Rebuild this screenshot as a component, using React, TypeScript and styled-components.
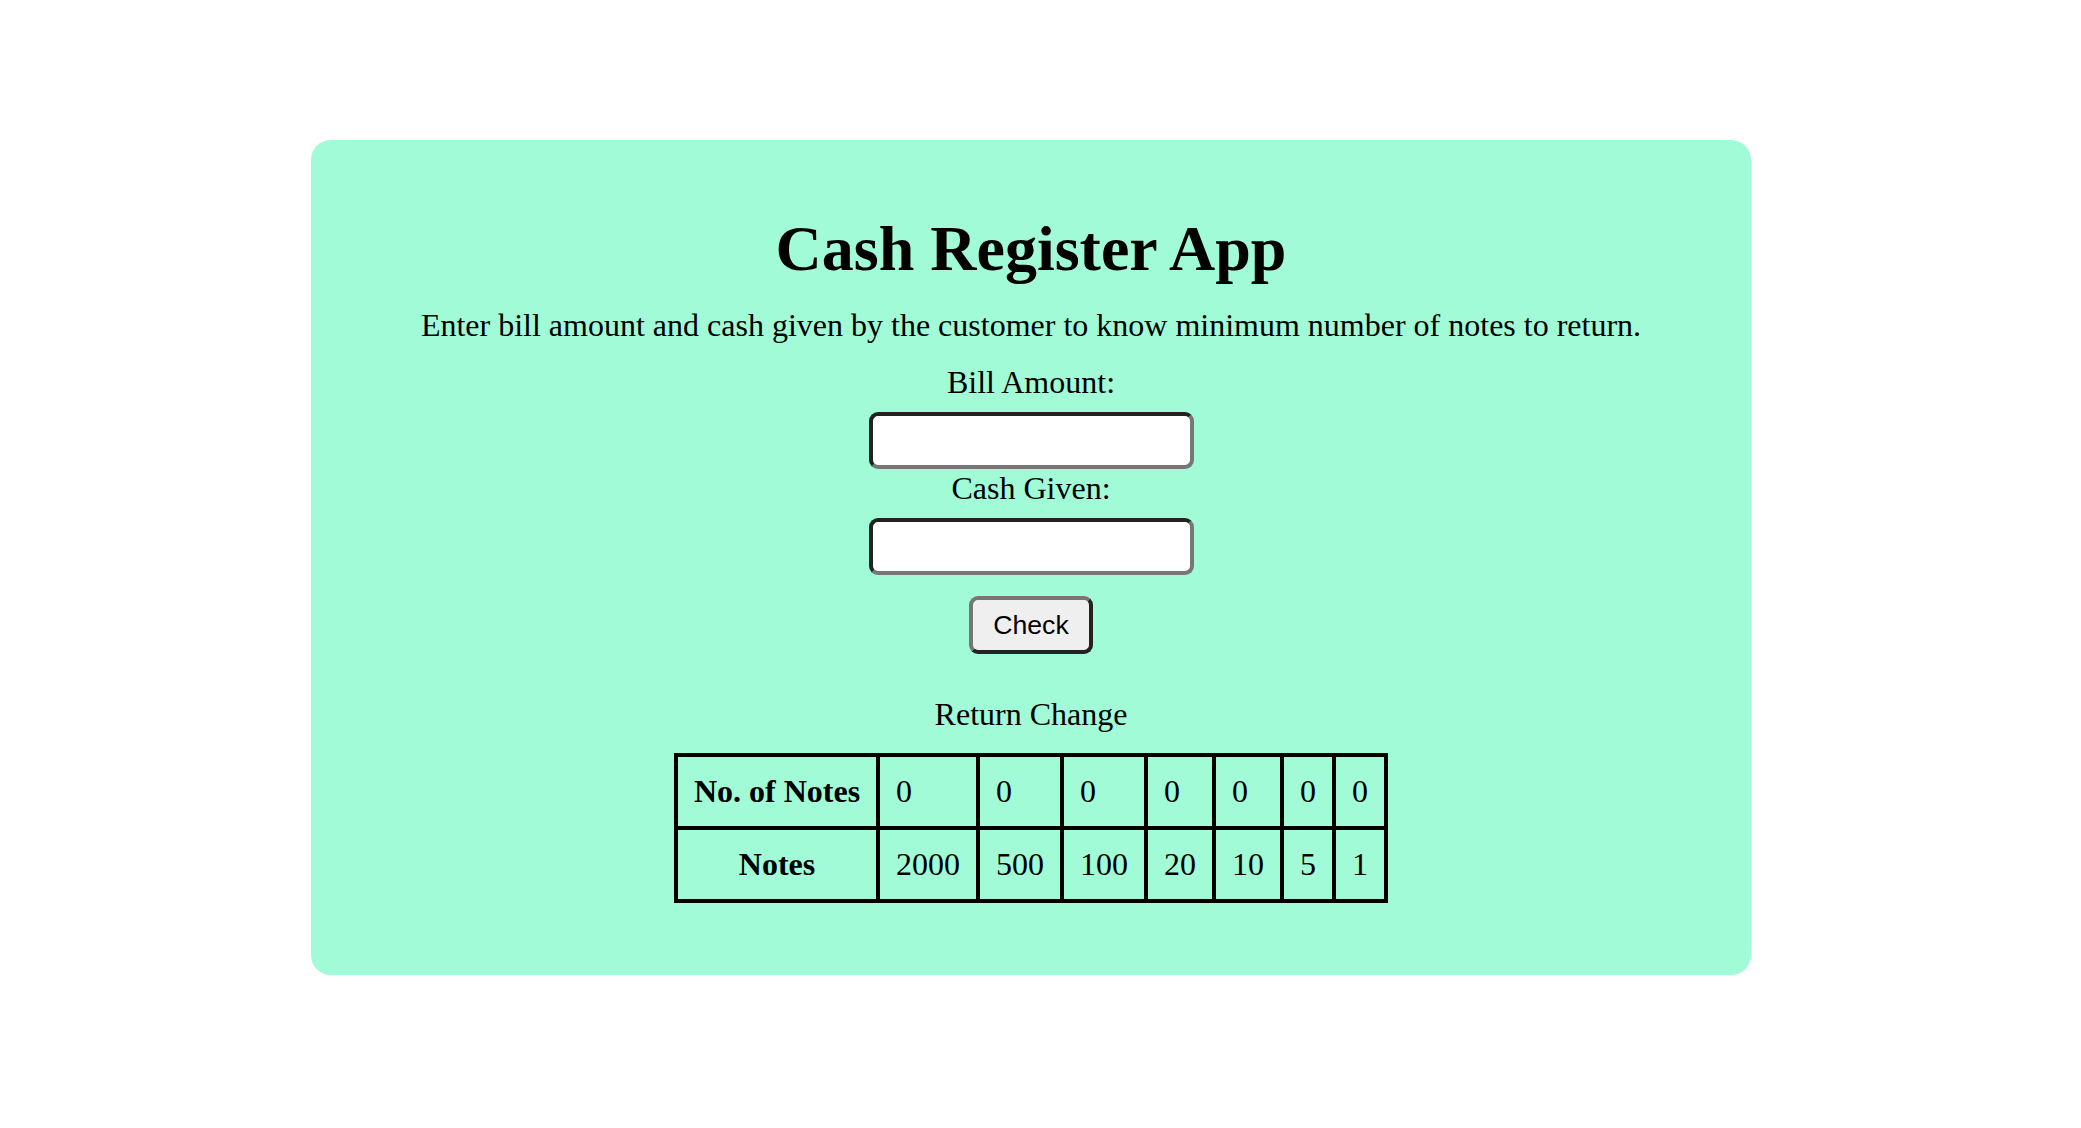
import React from "react";
import styled, { createGlobalStyle } from "styled-components";

const GlobalStyle = createGlobalStyle`
  html, body {
    margin: 0;
    padding: 0;
    background: #ffffff;
  }
  body {
    font-family: "Liberation Serif", "Times New Roman", serif;
    color: #000000;
  }
`;

const Page = styled.main`
  display: flex;
  justify-content: flex-start;
  padding: 140px 0 153px 311px;
`;

const Card = styled.section`
  box-sizing: border-box;
  width: 1440px;
  padding: 73px 0 72px;
  background: #a1fbd7;
  border-radius: 20px;
  display: flex;
  flex-direction: column;
  align-items: center;
`;

const Title = styled.h1`
  margin: 0;
  font-size: 64px;
  line-height: 71px;
  font-weight: 700;
`;

const Intro = styled.p`
  margin: 23px 0 0;
  font-size: 32px;
  line-height: 36px;
`;

const FieldLabel = styled.label<{ $gap: number }>`
  display: block;
  margin-top: ${(p) => p.$gap}px;
  font-size: 32px;
  line-height: 36px;
`;

const AmountInput = styled.input<{ $gap: number }>`
  box-sizing: border-box;
  width: 325px;
  height: 57px;
  margin: ${(p) => p.$gap}px 0 0;
  padding: 2px 6px;
  background: #ffffff;
  border-style: solid;
  border-width: 4px;
  border-color: #222222 #767676 #767676 #222222;
  border-radius: 9px;
  font-size: 27px;
  font-family: "Liberation Sans", Arial, sans-serif;
  outline: none;
`;

const CheckButton = styled.button`
  box-sizing: border-box;
  width: 124px;
  height: 58px;
  margin-top: 21px;
  padding: 0;
  background: #efefef;
  border-style: solid;
  border-width: 4px;
  border-color: #767676 #222222 #222222 #767676;
  border-radius: 9px;
  color: #000000;
  font-family: "Liberation Sans", Arial, Helvetica, sans-serif;
  font-size: 26.67px;
  line-height: 30px;
  cursor: pointer;
`;

const SectionLabel = styled.div`
  margin-top: 42px;
  font-size: 32px;
  line-height: 36px;
`;

const ChangeTable = styled.table`
  margin-top: 21px;
  border-collapse: collapse;
  border: 4px solid #000000;
  font-size: 32px;
  line-height: 37px;
`;

const HeadCell = styled.th`
  border: 4px solid #000000;
  padding: 16px;
  font-weight: 700;
  text-align: center;
  white-space: nowrap;
`;

const Cell = styled.td`
  border: 4px solid #000000;
  padding: 16px;
  text-align: left;
  white-space: nowrap;
`;

const notes = [2000, 500, 100, 20, 10, 5, 1];

export default function App() {
  return (
    <>
      <GlobalStyle />
      <Page>
        <Card>
          <Title>Cash Register App</Title>
          <Intro>
            Enter bill amount and cash given by the customer to know minimum
            number of notes to return.
          </Intro>
          <FieldLabel $gap={21} htmlFor="bill">
            Bill Amount:
          </FieldLabel>
          <AmountInput $gap={12} id="bill" type="number" />
          <FieldLabel $gap={1} htmlFor="cash">
            Cash Given:
          </FieldLabel>
          <AmountInput $gap={12} id="cash" type="number" />
          <CheckButton type="button">Check</CheckButton>
          <SectionLabel>Return Change</SectionLabel>
          <ChangeTable>
            <tbody>
              <tr>
                <HeadCell>No. of Notes</HeadCell>
                {notes.map((n) => (
                  <Cell key={`c-${n}`}>0</Cell>
                ))}
              </tr>
              <tr>
                <HeadCell>Notes</HeadCell>
                {notes.map((n) => (
                  <Cell key={`n-${n}`}>{n}</Cell>
                ))}
              </tr>
            </tbody>
          </ChangeTable>
        </Card>
      </Page>
    </>
  );
}
